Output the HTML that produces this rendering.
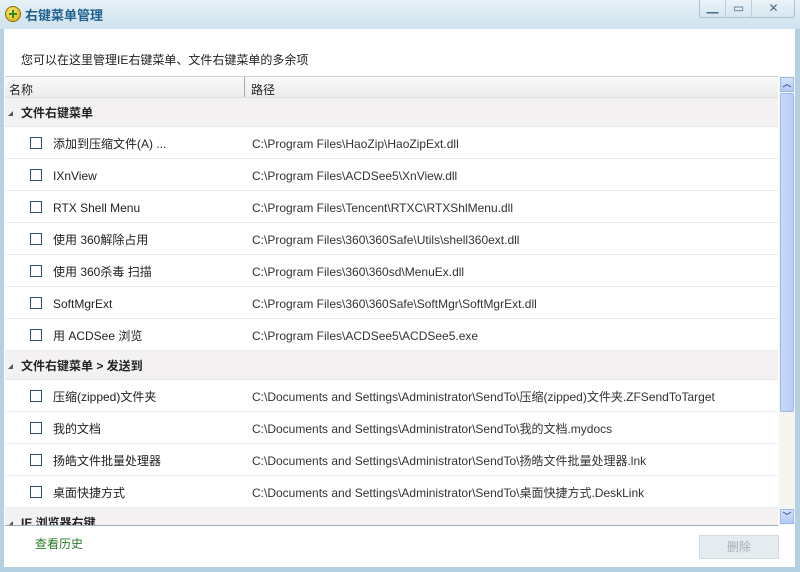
<!DOCTYPE html>
<html><head><meta charset="utf-8"><style>
*{margin:0;padding:0;box-sizing:border-box}
body{width:800px;height:572px;overflow:hidden;background:#b5d0e2;font-family:"Liberation Sans","Noto Sans CJK SC",sans-serif;font-size:12px;color:#222;position:relative}
.title{position:absolute;left:0;top:0;width:800px;height:29px;background:linear-gradient(#e6f1f7,#cfe2ee)}
.title .t{position:absolute;left:25px;top:5px;font-size:13px;color:#1f5f8e;font-weight:bold}
.logo{position:absolute;left:5px;top:6px;width:16px;height:16px;border-radius:50%;background:radial-gradient(circle at 40% 35%,#ffe77a,#d8a400);border:1px solid #8a7000}
.logo:before{content:"";position:absolute;left:3px;top:6px;width:8px;height:2px;background:#2b8a1e}
.logo:after{content:"";position:absolute;left:6px;top:3px;width:2px;height:8px;background:#2b8a1e}
.btns{position:absolute;left:699px;top:0;width:96px;height:18px;border:1px solid #a9c3d4;border-top:none;border-radius:0 0 3px 3px;background:linear-gradient(#eaf3f8,#d6e6f0)}
.btns span{position:absolute;top:0;height:17px;border-right:1px solid #b6cedc;color:#4a6a86;text-align:center;font-size:12px;line-height:16px}
.main{position:absolute;left:4px;top:29px;width:791px;height:538px;background:#fff}
.desc{position:absolute;left:21px;top:51px;font-size:12px}
.hdr{position:absolute;left:5px;top:76px;width:773px;height:22px;background:linear-gradient(#fafafa,#ececec);border-top:1px solid #d0d0d0;border-bottom:1px solid #e0e0e0}
.hdr div{position:absolute;top:4px}
.list{position:absolute;left:5px;top:98px;width:773px;height:427px;overflow:hidden}
.g{height:29px;background:#f3f1f2;border-bottom:1px solid #e6e6e6;font-weight:bold;line-height:31px;padding-left:16px;position:relative;font-size:12px}
.g:before{content:"";position:absolute;left:3px;top:13px;border-left:5px solid transparent;border-bottom:5px solid #555}
.r{height:32px;border-bottom:1px solid #e6eef4;position:relative;line-height:34px}
.r i{position:absolute;left:25px;top:10px;width:12px;height:12px;border:1px solid #2c4f7a;background:#fff}
.r .n{position:absolute;left:48px}
.r .p{position:absolute;left:247px;color:#333}
.sb{position:absolute;left:779px;top:76px;width:16px;height:449px;background:#f6f6f0}
.sb .a{position:absolute;left:1px;width:14px;height:15px;background:linear-gradient(#d6e4fb,#b2c9f2);border:1px solid #9fb8e6;color:#3b5d96;font-size:9px;text-align:center;line-height:13px;font-weight:bold}
.sb .th{position:absolute;left:1px;top:17px;width:14px;height:319px;background:linear-gradient(90deg,#c8d8f8,#b7cdf6);border:1px solid #a2b9e6;border-radius:2px}
.foot{position:absolute;left:5px;top:525px;width:773px;height:1px;background:#9ab}
.hist{position:absolute;left:35px;top:535px;color:#2a7a2a;font-size:12px}
.del{position:absolute;left:699px;top:535px;width:80px;height:24px;background:#e4ecf0;border:1px solid #d2dde3;color:#a6b0b6;text-align:center;line-height:22px}
</style></head><body>
<div class="title"><div class="logo"></div><div class="t">右键菜单管理</div>
<div class="btns"><span style="left:0;width:26px">▁</span><span style="left:26px;width:26px">▭</span><span style="left:52px;width:43px;border:none">✕</span></div></div>
<div class="main"></div>
<div class="desc">您可以在这里管理IE右键菜单、文件右键菜单的多余项</div>
<div class="hdr"><div style="left:4px">名称</div><div style="left:239px;top:0;height:20px;border-left:1px solid #aaa;padding:4px 0 0 6px">路径</div></div>
<div class="list">
<div class="g">文件右键菜单</div>
<div class="r"><i></i><span class="n">添加到压缩文件(A) ...</span><span class="p">C:\Program Files\HaoZip\HaoZipExt.dll</span></div>
<div class="r"><i></i><span class="n">IXnView</span><span class="p">C:\Program Files\ACDSee5\XnView.dll</span></div>
<div class="r"><i></i><span class="n">RTX Shell Menu</span><span class="p">C:\Program Files\Tencent\RTXC\RTXShlMenu.dll</span></div>
<div class="r"><i></i><span class="n">使用 360解除占用</span><span class="p">C:\Program Files\360\360Safe\Utils\shell360ext.dll</span></div>
<div class="r"><i></i><span class="n">使用 360杀毒 扫描</span><span class="p">C:\Program Files\360\360sd\MenuEx.dll</span></div>
<div class="r"><i></i><span class="n">SoftMgrExt</span><span class="p">C:\Program Files\360\360Safe\SoftMgr\SoftMgrExt.dll</span></div>
<div class="r"><i></i><span class="n">用 ACDSee 浏览</span><span class="p">C:\Program Files\ACDSee5\ACDSee5.exe</span></div>
<div class="g">文件右键菜单 &gt; 发送到</div>
<div class="r"><i></i><span class="n">压缩(zipped)文件夹</span><span class="p">C:\Documents and Settings\Administrator\SendTo\压缩(zipped)文件夹.ZFSendToTarget</span></div>
<div class="r"><i></i><span class="n">我的文档</span><span class="p">C:\Documents and Settings\Administrator\SendTo\我的文档.mydocs</span></div>
<div class="r"><i></i><span class="n">扬皓文件批量处理器</span><span class="p">C:\Documents and Settings\Administrator\SendTo\扬皓文件批量处理器.lnk</span></div>
<div class="r"><i></i><span class="n">桌面快捷方式</span><span class="p">C:\Documents and Settings\Administrator\SendTo\桌面快捷方式.DeskLink</span></div>
<div class="g">IE 浏览器右键</div>
</div>
<div class="sb"><div class="a" style="top:1px">︿</div><div class="th"></div><div class="a" style="top:433px">﹀</div></div>
<div class="foot"></div>
<div class="hist">查看历史</div>
<div class="del">删除</div>
</body></html>
